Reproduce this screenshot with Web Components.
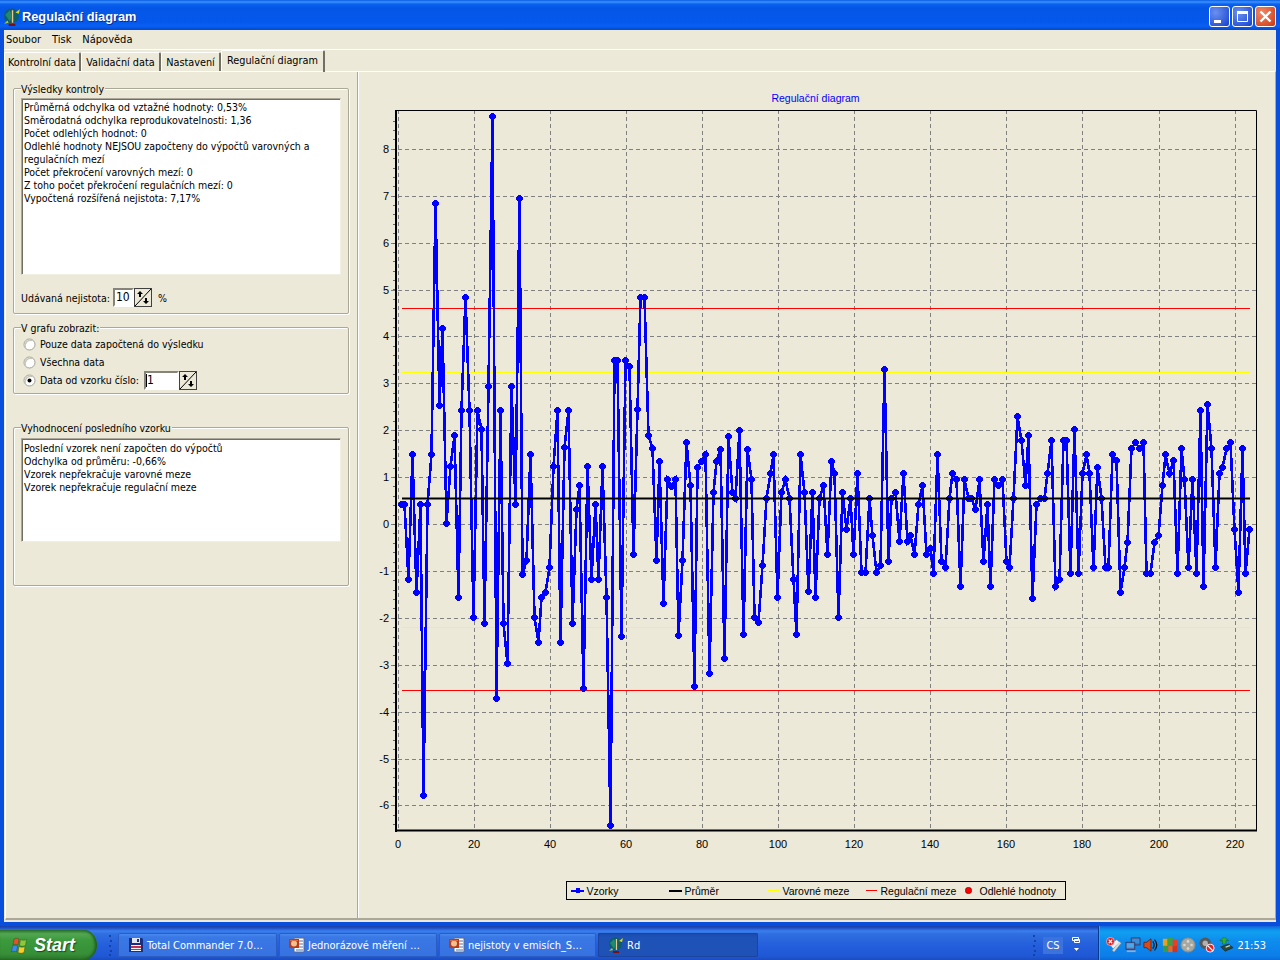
<!DOCTYPE html>
<html lang="cs">
<head>
<meta charset="utf-8">
<title>Regulační diagram</title>
<style>
  html, body { margin: 0; height: 960px; overflow: hidden; }
  body {
    display: flex; flex-direction: column; width: 1280px;
    font: 10.5px "DejaVu Sans Condensed", Roboto, "Liberation Sans", sans-serif; color: #000; background: #ece9d8;
  }
  xp-window { flex: 1; }
  #g1 { height: 226px; margin-top: 16px; padding: 9px 0 0 7px; }
  #g2 { height: 67px; margin-top: 13px; padding: 7px 0 0 9px; }
  #g3 { height: 159px; margin-top: 33px; padding: 10px 0 0 7px; }
  #vysledky { width: 320px; height: 177px; }
  #posledni { width: 320px; height: 104px; padding-top: 3px; }
  #nejistota { margin-top: 13px; display: flex; align-items: center; gap: 3px; height: 19px; }
  #nejistota .pct { margin-left: 3px; }
</style>
</head>
<body>
<xp-window title="Regulační diagram">
  <menu-bar items="Soubor|Tisk|Nápověda"></menu-bar>
  <tab-strip>
    <tab-item w="77">Kontrolní data</tab-item>
    <tab-item w="80">Validační data</tab-item>
    <tab-item w="60">Nastavení</tab-item>
    <tab-item w="104" active>Regulační diagram</tab-item>
  </tab-strip>
  <tab-page>
    <group-box id="g1" label="Výsledky kontroly">
      <sunken-box id="vysledky">
        <div>Průměrná odchylka od vztažné hodnoty: 0,53%</div>
        <div>Směrodatná odchylka reprodukovatelnosti: 1,36</div>
        <div>Počet odlehlých hodnot: 0</div>
        <div>Odlehlé hodnoty NEJSOU započteny do výpočtů varovných a</div>
        <div>regulačních mezí</div>
        <div>Počet překročení varovných mezí: 0</div>
        <div>Z toho počet překročení regulačních mezí: 0</div>
        <div>Vypočtená rozšířená nejistota: 7,17%</div>
      </sunken-box>
      <div id="nejistota">
        <span>Udávaná nejistota:</span>
        <spin-box value="10" w="21"></spin-box>
        <span class="pct">%</span>
      </div>
    </group-box>
    <group-box id="g2" label="V grafu zobrazit:">
      <radio-row>Pouze data započtená do výsledku</radio-row>
      <radio-row>Všechna data</radio-row>
      <radio-row checked>Data od vzorku číslo:<spin-box slot="after" value="1" w="35" caret></spin-box></radio-row>
    </group-box>
    <group-box id="g3" label="Vyhodnocení posledního vzorku">
      <sunken-box id="posledni">
        <div>Poslední vzorek není započten do výpočtů</div>
        <div>Odchylka od průměru: -0,66%</div>
        <div>Vzorek nepřekračuje varovné meze</div>
        <div>Vzorek nepřekračuje regulační meze</div>
      </sunken-box>
    </group-box>
    <control-chart slot="chart" title="Regulační diagram"></control-chart>
  </tab-page>
</xp-window>
<xp-taskbar>
  <task-button w="159" icon="disk">Total Commander 7.0…</task-button>
  <task-button w="158" icon="doc">Jednorázové měření …</task-button>
  <task-button w="157" icon="doc">nejistoty v emisích_S…</task-button>
  <task-button w="160" icon="app" active>Rd</task-button>
</xp-taskbar>

<script>
const ICONS = {
  app: `<svg width="16" height="16" viewBox="0 0 16 16"><circle cx="7.5" cy="7" r="6.500" fill="#0c5f62"/><path d="M2 6 6 2l2 5-2 5z" fill="#1f8a72"/><path d="M7 2h2.500v11H7z" fill="#a8452a"/><path d="M8 2h1v11H8z" fill="#e8c890"/><path d="M5 14h6v2H5z" fill="#7a1010"/><path d="M11 4l4-3-1 4z" fill="#d8d820"/><path d="M1 14l3-3 1 2z" fill="#b8c820"/></svg>`,
  disk: `<svg width="16" height="16" viewBox="0 0 16 16"><path d="M1 1h13l1 1v13H1z" fill="#1a2f80"/><path d="M4 1h8v5H4z" fill="#dfe4f2"/><path d="M9 2h2v3H9z" fill="#1a2f80"/><path d="M3 8h10v6H3z" fill="#f4f4f4"/><path d="M3 9h10v2H3z" fill="#c8304a"/><path d="M3 12h10v1H3z" fill="#c8304a"/></svg>`,
  doc: `<svg width="16" height="16" viewBox="0 0 16 16"><path d="M5 1h10v14H5z" fill="#fff" stroke="#5a6a8a"/><path d="M9 4h5M9 7h5M9 10h5M7 13h7" stroke="#4a70b0"/><path d="M0 2h10v9H0z" fill="#b83a18"/><circle cx="5" cy="6.5" r="3" fill="#f0c090"/><path d="M1 3h8v1H1z" fill="#e86a3a"/></svg>`
};

class XpWindow extends HTMLElement {
  constructor() {
    super();
    this.attachShadow({ mode: "open" });
  }
  connectedCallback() {
    this.shadowRoot.innerHTML = `
      <style>
        :host { display: flex; flex-direction: column; background: #0a4fdc; min-height: 0; }
        .bar {
          height: 30px; display: flex; align-items: center; flex: none; box-sizing: border-box; padding: 3px 4px 0 3px;
          background: linear-gradient(#0a5be0 0, #3a93ff 2px, #0b61ee 4px, #0456e6 8px, #0458ec 22px, #0a60f2 26px, #0349d2 30px);
        }
        .bar > svg { width: 18px; height: 18px; }
        .name {
          margin-left: 1px; color: #fff; font: bold 12.8px "Liberation Sans", Arial, sans-serif;
          text-shadow: 1px 1px 0 #0a2a90;
        }
        .ctl { margin-left: auto; display: flex; gap: 2px; }
        .ctl span {
          width: 21px; height: 21px; box-sizing: border-box; border: 1px solid #fff; border-radius: 3px; display: block;
          background: radial-gradient(circle at 30% 30%, #6a90f0, #2a55d8 75%, #1a3cc0);
        }
        .ctl span.x { background: radial-gradient(circle at 30% 30%, #ee8a6a, #d8502a 70%, #c03810); }
        .ctl svg { display: block; }
        .body { flex: 1; min-height: 0; margin: 0 4px 4px; background: #ece9d8; display: flex; flex-direction: column; }
      </style>
      <div class="bar">
        ${ICONS.app}
        <span class="name">${this.getAttribute("title")}</span>
        <div class="ctl">
          <span><svg width="19" height="19"><rect x="4" y="13" width="7" height="3" fill="#fff"/></svg></span>
          <span><svg width="19" height="19"><path d="M4.500 4.500h10v10h-10z" fill="none" stroke="#fff"/><rect x="4" y="4" width="11" height="3" fill="#fff"/></svg></span>
          <span class="x"><svg width="19" height="19"><path d="M4.500 4.500l10 10M14.500 4.500l-10 10" stroke="#fff" stroke-width="2.400"/></svg></span>
        </div>
      </div>
      <div class="body"><slot></slot></div>`;
  }
}

class MenuBar extends HTMLElement {
  constructor() {
    super();
    this.attachShadow({ mode: "open" });
  }
  connectedCallback() {
    const items = this.getAttribute("items").split("|").map(i => `<span>${i}</span>`).join("");
    this.shadowRoot.innerHTML = `
      <style>
        :host { display: flex; height: 19px; align-items: center; gap: 11px; padding-left: 2px; border-bottom: 1px solid #fff; flex: none; font-size: 11px; }
      </style>${items}`;
  }
}

class TabStrip extends HTMLElement {
  constructor() {
    super();
    this.attachShadow({ mode: "open" });
  }
  connectedCallback() {
    this.shadowRoot.innerHTML = `
      <style>
        :host { display: flex; align-items: flex-end; height: 21px; flex: none; position: relative; z-index: 1; font-size: 10.8px; }
      </style><slot></slot>`;
  }
}

class TabItem extends HTMLElement {
  constructor() {
    super();
    this.attachShadow({ mode: "open" });
  }
  connectedCallback() {
    const on = this.hasAttribute("active");
    this.shadowRoot.innerHTML = `
      <style>
        :host {
          display: flex; align-items: center; justify-content: center; box-sizing: border-box;
          width: ${this.getAttribute("w")}px; height: ${on ? 22 : 19}px;
          border-top: 1px solid #fff; border-left: 1px solid #fff;
          border-right: 2px solid #716f64; border-radius: 2px 2px 0 0;
          ${on ? "margin-bottom:-1px;padding-bottom:3px;" : ""}
        }
      </style><slot></slot>`;
  }
}

class TabPage extends HTMLElement {
  constructor() {
    super();
    this.attachShadow({ mode: "open" });
  }
  connectedCallback() {
    this.shadowRoot.innerHTML = `
      <style>
        :host {
          display: flex; flex: 1; min-height: 0; margin: 0 0 2px 1px;
          border-top: 1px solid #fff; border-left: 1px solid #fff; border-right: 1px solid #aca899; border-bottom: 2px solid #aca899;
        }
        .left { width: 336px; padding: 0 8px 0 7px; border-right: 1px solid #aca899; box-shadow: 1px 0 0 #fff; flex: none; display: flex; flex-direction: column; }
        .right { flex: 1; min-width: 0; }
      </style>
      <div class="left"><slot></slot></div>
      <div class="right"><slot name="chart"></slot></div>`;
  }
}

class GroupBox extends HTMLElement {
  constructor() {
    super();
    this.attachShadow({ mode: "open" });
  }
  connectedCallback() {
    this.shadowRoot.innerHTML = `
      <style>
        :host {
          display: block; position: relative; box-sizing: border-box; flex: none;
          border: 1px solid #aca899; border-radius: 2px;
          box-shadow: inset 1px 1px 0 #fff, 1px 1px 0 #fff;
        }
        .legend { position: absolute; left: 7px; top: -6px; height: 13px; line-height: 13px; background: #ece9d8; padding-right: 1px; }
      </style>
      <div class="legend">${this.getAttribute("label")}</div>
      <slot></slot>`;
  }
}

class SunkenBox extends HTMLElement {
  constructor() {
    super();
    this.attachShadow({ mode: "open" });
  }
  connectedCallback() {
    this.shadowRoot.innerHTML = `
      <style>
        :host {
          display: block; box-sizing: border-box; background: #fff; padding: 2px 2px 0 2px; line-height: 13px; white-space: nowrap;
          border: 1px solid; border-color: #aca899 #f1efe2 #f1efe2 #aca899;
          box-shadow: inset 1px 1px 0 #716f64;
        }
      </style><slot></slot>`;
  }
}

class SpinBox extends HTMLElement {
  constructor() {
    super();
    this.attachShadow({ mode: "open" });
  }
  connectedCallback() {
    const caret = this.hasAttribute("caret") ? `<i></i>` : "";
    this.shadowRoot.innerHTML = `
      <style>
        :host { display: inline-flex; height: 19px; flex: none; }
        .val {
          width: ${this.getAttribute("w")}px; box-sizing: border-box; background: #fff; padding-left: 1px; line-height: 15px; font-size: 12px;
          border: 2px solid; border-color: #85837a #fff #fff #85837a; display: flex;
        }
        i { display: block; width: 1px; height: 13px; margin: 1px 0 0 -1px; background: #000; order: -1; }
        svg { display: block; }
      </style>
      <div class="val">${this.getAttribute("value")}${caret}</div>
      <svg width="18" height="19" viewBox="0 0 18 19">
        <rect width="18" height="19" fill="#fff"/>
        <rect x=".5" y=".5" width="17" height="18" fill="#ece9d8" stroke="#404040"/>
        <path d="M17 1 1 18" stroke="#000"/>
        <path d="M6 3 3 6h2v3h2V6h2z M12 16l3-3h-2v-3h-2v3H9z" fill="#000"/>
      </svg>`;
  }
}

class RadioRow extends HTMLElement {
  constructor() {
    super();
    this.attachShadow({ mode: "open" });
  }
  connectedCallback() {
    const dot = this.hasAttribute("checked") ? `<circle cx="6.5" cy="6.5" r="2" fill="#000"/>` : "";
    this.shadowRoot.innerHTML = `
      <style>
        :host { display: flex; align-items: center; height: 18px; }
        svg { margin-right: 4px; flex: none; }
        ::slotted(spin-box) { margin-left: 5px; }
      </style>
      <svg width="13" height="13" viewBox="0 0 13 13">
        <circle cx="6.5" cy="6.5" r="5.5" fill="#fff" stroke="#a0a096"/>
        <path d="M2.500 9.500a5.500 5.500 0 0 1 7-7" fill="none" stroke="#c8c6ba" stroke-width="1.500"/>
        ${dot}
      </svg>
      <slot></slot><slot name="after"></slot>`;
  }
}

const VZORKY = [
  .44,.44,-1.16,1.5,-1.43,.44,-5.75,.44,1.5,6.85,
  2.55,4.18,.03,1.25,1.91,-1.55,2.43,4.85,2.43,-1.97,
  2.43,2.03,-2.09,2.95,8.7,-3.7,2.43,-2.09,-2.95,2.95,
  .44,6.95,-1.05,-.75,1.5,-1.97,-2.5,-1.55,-1.43,-.9,
  1.25,2.43,-2.5,1.64,2.43,-2.09,.32,.85,-3.47,1.25,
  -1.16,.44,-1.16,1.25,-1.55,-6.4,3.51,3.51,-2.37,3.51,
  3.38,-.63,2.45,4.85,4.85,1.91,1.63,-.76,1.36,-1.68,
  .97,.82,.97,-2.36,-.76,1.76,.83,-3.43,1.22,1.36,
  1.49,-3.15,.7,1.36,1.6,-2.85,1.88,.7,.57,2.02,
  -2.32,1.6,.97,-1.96,-2.07,-.87,.57,1.1,1.49,-1.55,
  .7,.97,.57,-1.16,-2.32,1.49,.7,-1.42,.7,-1.55,
  .57,.83,-.63,1.36,1.1,-1.96,.7,-.09,.57,-.63,
  1.1,-1,-1,.57,-.22,-1,-.87,3.3,-.77,.57,
  .7,-.36,1.1,-.36,-.22,-.63,.44,.85,-.63,-.5,
  -1.03,1.5,-.77,-.9,.57,1.1,.97,-1.3,.97,.57,
  .57,.32,.97,-.78,.44,-1.31,.97,.85,.97,-.78,
  -.91,.57,2.31,1.79,.85,1.91,-1.56,.44,.57,.57,
  1.1,1.79,-1.31,-1.16,1.79,1.79,-1.03,2.04,-1.03,1.1,
  1.5,1.1,-.91,1.23,.57,-.91,-.91,1.5,1.37,-1.43,
  -.91,-.37,1.63,1.76,1.63,1.76,-1.03,-1.03,-.37,-.22,
  .85,1.5,1.1,1.37,-1.03,1.63,.97,-.91,.97,-1.03,
  2.44,-1.3,2.57,1.63,-.91,1.1,1.23,1.63,1.76,-.1,
  -1.43,1.63,-1.03,-.1
];

class ControlChart extends HTMLElement {
  constructor() {
    super();
    this.attachShadow({ mode: "open" });
  }
  getSvg() {
    const L = 396, R = 1256, T = 110, B = 830;
    const gx = k => Math.floor(398 + 3.805 * k) + .5;
    const gy = v => Math.floor(524.5 - 46.9 * v) + .5;
    let s = "";
    // mrizka
    for (let k = 0; k <= 220; k += 20) {
      s += `<path d="M${gx(k)} ${T}V${B}" stroke="#808080" stroke-dasharray="4 3"/>`;
      s += `<text x="${gx(k) - .5}" y="848" text-anchor="middle">${k}</text>`;
    }
    for (let v = -6; v <= 8; v++) {
      s += `<path d="M391 ${gy(v)}H${R}" stroke="#808080" stroke-dasharray="4 3"/>`;
      s += `<text x="389" y="${gy(v) + 3}" text-anchor="end">${v}</text>`;
    }
    for (let v = -6.4; v <= 8.8; v += .2) {
      s += `<path d="M393 ${gy(v)}h3" stroke="#666"/>`;
    }
    // meze
    s += `<path d="M402 372.5H1250M402 627.5H1250" stroke="#ffff00"/>`;
    s += `<path d="M402 308.5H1250M402 690.5H1250" stroke="#ff0000"/>`;
    // vzorky
    const pts = VZORKY.map((v, i) => [Math.floor(397.3 + 3.805 * (i + 1)), Math.floor(525 - 47 * v)]);
    s += `<polyline points="${pts.map(p => `${p[0] + .5},${p[1] + .5}`).join(" ")}" fill="none" stroke="#0000ff" stroke-width="2.600" shape-rendering="crispEdges"/>`;
    s += pts.map(([x, y]) => `<path d="M${x - 2} ${y - 2}h5v5h-5z M${x - 1} ${y - 3}h3v7h-3z M${x - 3} ${y - 1}h7v3h-7z" fill="#0000ff"/>`).join("");
    // prumer
    s += `<path d="M402 498.5H1250" stroke="#000" stroke-width="2"/>`;
    // osy
    s += `<path d="M${L} ${T}.5H${R + .5}V${B}" fill="none" stroke="#000"/>`;
    s += `<path d="M${L} ${T}V${B + 2}" stroke="#000" stroke-width="2"/>`;
    s += `<path d="M${L} ${B + .5}H${R + 1}" stroke="#000" stroke-width="2"/>`;
    return s;
  }
  connectedCallback() {
    this.shadowRoot.innerHTML = `
      <style>
        :host { display: flex; flex-direction: column; align-items: center; padding-top: 20px; }
        .title { color: #0000ff; font: 10.5px/13px "Liberation Sans", Arial, sans-serif; height: 13px; margin-right: 2px; }
        svg { display: block; flex: none; }
        .plot { align-self: flex-start; }
        text { font: 11px "Liberation Sans", Arial, sans-serif; fill: #000; }
        .legend {
          margin: 16px 2px 0 0; box-sizing: border-box; height: 19px; width: 500px; border: 1px solid #000; flex: none;
          display: grid; grid-template-columns: 98px 99px 98px 99px 1fr; align-items: center;
          font: 10.5px "Liberation Sans", Arial, sans-serif; padding-left: 4px;
        }
        .legend div { display: flex; align-items: center; gap: 3px; }
        .legend div.wide { gap: 4px; }
        .legend b { display: block; width: 11px; height: 1px; }
        .legend svg { flex: none; }
      </style>
      <div class="title">${this.getAttribute("title")}</div>
      <svg class="plot" width="918" height="760" viewBox="358 105 918 760">${this.getSvg()}</svg>
      <div class="legend">
        <div><svg width="13" height="7"><path d="M0 3h13v2H0zM5 1h4v5H5z" fill="#00f"/></svg>Vzorky</div>
        <div><b style="width:13px;height:2px;background:#000"></b>Průměr</div>
        <div class="wide"><b style="background:#ff0"></b>Varovné meze</div>
        <div class="wide"><b style="background:#f00"></b>Regulační meze</div>
        <div style="gap:8px"><svg width="7" height="7"><circle cx="3.5" cy="3.5" r="3.200" fill="#f00" stroke="#400" stroke-width=".5"/></svg>Odlehlé hodnoty</div>
      </div>`;
  }
}

class TaskButton extends HTMLElement {
  constructor() {
    super();
    this.attachShadow({ mode: "open" });
  }
  connectedCallback() {
    const on = this.hasAttribute("active");
    this.shadowRoot.innerHTML = `
      <style>
        :host {
          display: flex; align-items: center; gap: 3px; box-sizing: border-box; height: 24px; padding-left: 10px;
          width: ${this.getAttribute("w")}px; color: #fff; border-radius: 2px; flex: none; white-space: nowrap;
          background: ${on ? "linear-gradient(#1a48a8, #1e52b7 4px)" : "linear-gradient(#4f8ff0, #3a78e6 4px, #3672e0)"};
          box-shadow: inset 0 0 0 1px ${on ? "#1a44a0" : "#2a5cc4"};
        }
        svg { flex: none; }
      </style>
      ${ICONS[this.getAttribute("icon")]}<slot></slot>`;
  }
}

class XpTaskbar extends HTMLElement {
  constructor() {
    super();
    this.attachShadow({ mode: "open" });
  }
  connectedCallback() {
    const grip = `<svg class="grip" width="5" height="24"><path d="M1 2h2v2H1zM2 7h2v2H2zM1 12h2v2H1zM2 17h2v2H2zM1 21h2v2H1z" fill="#1442a8"/></svg>`;
    this.shadowRoot.innerHTML = `
      <style>
        :host {
          display: flex; align-items: flex-end; height: 34px; flex: none; color: #fff; font-size: 11px;
          background: linear-gradient(#1a3fa8 0, #1f50c4 2px, #3b7fee 5px, #2f6ee0 8px, #245edc 20px, #2058d4 30px, #1b4cc0 34px);
        }
        .start {
          width: 97px; height: 30px; box-sizing: border-box; display: flex; align-items: center; padding-left: 11px; gap: 4px; flex: none;
          border-radius: 0 14px 14px 0 / 0 16px 16px 0;
          background: linear-gradient(#2e7e32, #53a653 4px, #3c9a3c 10px, #378f37 24px, #2a742a 30px);
          box-shadow: inset -2px 0 3px #1e5a1e;
          font: italic bold 18px "Liberation Sans", Arial, sans-serif; text-shadow: 1px 1px 1px #1c4a1c;
        }
        .start svg { flex: none; }
        .grip { margin: 0 0 3px 11px; flex: none; }
        .tasks { display: flex; gap: 2px; margin: 0 0 3px 5px; }
        .lang { margin-left: auto; display: flex; align-items: center; height: 30px; }
        .lang .grip { margin: 0 6px 0 0; }
        .cs { background: #3c72dc; padding: 2px 3px; line-height: 13px; width: 14px; text-align: center; }
        .bars { margin: 0 16px 0 8px; display: block; }
        .tray {
          width: 182px; height: 34px; box-sizing: border-box; display: flex; align-items: center; padding: 4px 14px 0 7px; flex: none;
          background: linear-gradient(#1462d8 0, #0c8ae8 3px, #10a0f0 6px, #0e8eee 14px, #0c7ee8 30px, #0a6cd8);
          border-left: 1px solid #0a3a90; box-shadow: inset 1px 0 0 #18b0f0;
        }
        .tray svg { flex: none; display: block; margin-right: 2.6px; width: 16px; height: 16px; }
        .clock { margin-left: auto; flex: none; }
      </style>
      <div class="start">
        <svg width="19" height="19" viewBox="0 0 19 19">
          <path d="M3 3c2-1 3-1 5 0l-1 6c-2-1-3-1-5 0z" fill="#e8502a" stroke="#1c4a1c" stroke-width=".4"/>
          <path d="M9.500 3.500c2 1 4 1 6 0l-1 6c-2 1-4 1-6 0z" fill="#8cc83c" stroke="#1c4a1c" stroke-width=".4"/>
          <path d="M1.500 10c2-1 3-1 5 0l-1 6c-2-1-3-1-5 0z" fill="#3a8cf0" stroke="#1c4a1c" stroke-width=".4"/>
          <path d="M8 10.500c2 1 4 1 6 0l-1 6c-2 1-4 1-6 0z" fill="#f8cc2c" stroke="#1c4a1c" stroke-width=".4"/>
        </svg>
        <span>Start</span>
      </div>
      ${grip}
      <div class="tasks"><slot></slot></div>
      <div class="lang">
        ${grip}
        <span class="cs">CS</span>
        <svg class="bars" width="11" height="18" viewBox="0 0 11 18"><path d="M3.500 3.500h5v3h-5zM1.500 1.500h6v3h-6z" fill="#2a60d0" stroke="#fff"/><path d="M3 12h5l-2.500 3z" fill="#fff"/></svg>
      </div>
      <div class="tray">
        <svg viewBox="0 0 18 18"><path d="M7 15 15 5l2 2-8 10z" fill="#d8d8d8" stroke="#888" stroke-width=".5"/><path d="M5 9 12 3l3 3-7 7z" fill="#f0f0f0"/><circle cx="5" cy="5" r="4.500" fill="#e01818" stroke="#fff" stroke-width=".6"/><path d="M3 3l4 4M7 3 3 7" stroke="#fff" stroke-width="1.300"/></svg>
        <svg viewBox="0 0 18 18"><path d="M7 1h10v8H7z" fill="#506aa0" stroke="#1c2c60" stroke-width=".7"/><path d="M8 2h8v5H8z" fill="#3a90d8"/><path d="M1 6h10v8H1z" fill="#5a70a8" stroke="#1c2c60" stroke-width=".7"/><path d="M2 7h8v5H2z" fill="#4ea8e8"/><path d="M2 15h10v2H2z" fill="#9aa8c8"/></svg>
        <svg viewBox="0 0 18 18"><path d="M1 6h3l5-4v14l-5-4H1z" fill="#d84a18" stroke="#401008" stroke-width=".7"/><path d="M11 5q3 4 0 8M13 3q5 6 0 12" fill="none" stroke="#101010" stroke-width="1.300"/></svg>
        <svg viewBox="0 0 18 18"><path d="M1 2h6v8H1z" fill="#e8a020"/><path d="M6 1h6v9H6z" fill="#40a040"/><path d="M12 3h5v8h-5z" fill="#e84020"/><path d="M1 10h6v7H1z" fill="#3a9a4a"/><path d="M7 10h5v7H7z" fill="#e86a20"/><path d="M12 10h5v7h-5z" fill="#d83020"/></svg>
        <svg viewBox="0 0 18 18"><circle cx="9" cy="9" r="8" fill="#a8a8a0" stroke="#8a8a84"/><circle cx="9" cy="5" r="1.500" fill="#d8d8d0"/><circle cx="5" cy="9" r="1.500" fill="#d8d8d0"/><circle cx="13" cy="9" r="1.500" fill="#d8d8d0"/><circle cx="9" cy="13" r="1.500" fill="#d8d8d0"/></svg>
        <svg viewBox="0 0 18 18"><circle cx="7" cy="7" r="6.500" fill="#585858"/><circle cx="7" cy="7" r="3" fill="#b0b0b0"/><circle cx="12.500" cy="12.500" r="4.500" fill="#e82020" stroke="#fff"/><path d="M9.500 9.500l6 6" stroke="#fff" stroke-width="1.300"/></svg>
        <svg viewBox="0 0 18 18"><path d="M3 11l9-3 5 4-9 4z" fill="#2a4a3a" stroke="#101a14" stroke-width=".6"/><path d="M8 11l5-2 1 1-5 2z" fill="#c8d8c8"/><path d="M5 8V4H2l5-4 5 4H9v4z" fill="#30b030" stroke="#106010" stroke-width=".5"/></svg>
        <span class="clock">21:53</span>
      </div>`;
  }
}

customElements.define("xp-window", XpWindow);
customElements.define("menu-bar", MenuBar);
customElements.define("tab-strip", TabStrip);
customElements.define("tab-item", TabItem);
customElements.define("tab-page", TabPage);
customElements.define("group-box", GroupBox);
customElements.define("sunken-box", SunkenBox);
customElements.define("spin-box", SpinBox);
customElements.define("radio-row", RadioRow);
customElements.define("control-chart", ControlChart);
customElements.define("task-button", TaskButton);
customElements.define("xp-taskbar", XpTaskbar);
</script>
</body>
</html>
